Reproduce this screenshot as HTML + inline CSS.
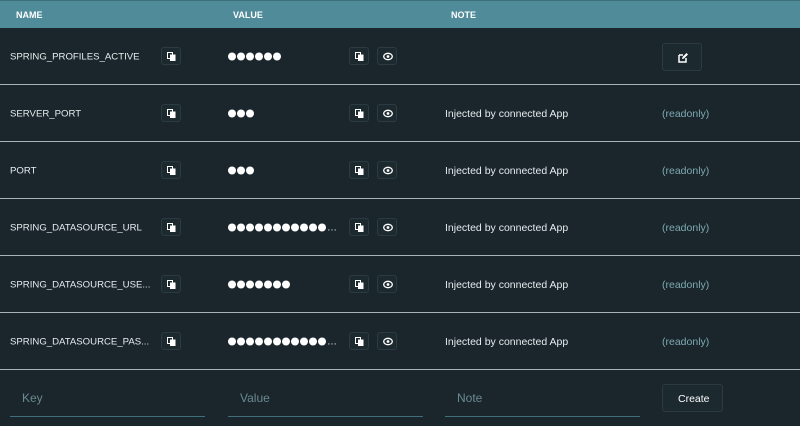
<!DOCTYPE html>
<html><head><style>
body{margin:0;width:800px;height:426px;background:#1a262c;font-family:"Liberation Sans",sans-serif;color:#e6ecee;overflow:hidden;position:relative}
.hd{position:absolute;left:0;top:0;width:800px;height:28px;background:#4f8b99;border-top:1px solid #3d6f7a;box-sizing:border-box}
.hd span{position:absolute;top:9px;font-size:9px;font-weight:bold;color:#fff}
.row{position:absolute;left:0;width:800px;height:57px;border-bottom:1px solid #a9b3b6;box-sizing:border-box}
.t{position:absolute;top:50%;transform:translateY(-50%);font-size:10.5px;white-space:nowrap;margin-top:1px}
.n{font-size:9.6px}
.b{position:absolute;width:20px;height:18px;border:1px solid #2c3b42;border-radius:3px;box-sizing:border-box;background:#1c292f;top:19px}
.b svg{position:absolute;left:5px;top:4px}
.dots{font-size:10px;line-height:9px}
.dots i{display:inline-block;width:8px;height:8px;border-radius:50%;background:#fff;margin-right:1px;vertical-align:middle}
.ro{color:#7fa9b3}
.in{position:absolute;top:386px;width:195px;height:30px;border-bottom:1px solid #3e6f7a}
.in span{position:absolute;left:12px;top:5px;font-size:12px;color:#6a8990}
</style></head><body>
<div class="hd"><span style="left:16px">NAME</span><span style="left:233px">VALUE</span><span style="left:451px">NOTE</span></div>
<div id="rest"></div>
<script>
var rows=[["SPRING_PROFILES_ACTIVE",6,0,0],["SERVER_PORT",3,0,1],["PORT",3,0,1],["SPRING_DATASOURCE_URL",11,1,1],["SPRING_DATASOURCE_USE...",7,0,1],["SPRING_DATASOURCE_PAS...",11,1,1]];
var cp='<svg width="9" height="9" viewBox="0 0 9 9"><rect x="0.5" y="0.5" width="5" height="6" fill="none" stroke="#fff"/><rect x="3" y="2.5" width="5.5" height="6.5" fill="#fff"/></svg>';
var ey='<svg width="10" height="9" viewBox="0 0 10 9"><ellipse cx="5" cy="4.5" rx="4.3" ry="3.2" fill="none" stroke="#fff" stroke-width="1.3"/><circle cx="5" cy="4.5" r="1.4" fill="#fff"/></svg>';
var ed='<div class="b" style="left:662px;top:15px;width:40px;height:28px"><svg style="left:15px;top:9px" width="10" height="10" viewBox="0 0 10 10"><path d="M1 2h4M1 2v7h7V5" fill="none" stroke="#fff" stroke-width="1.5"/><path d="M4 6l0.5-2 4-4 1.5 1.5-4 4z" fill="#fff"/></svg></div>';
var h='';rows.forEach(function(r,i){var top=28+i*57;var d='';for(var k=0;k<r[1];k++)d+='<i></i>';if(r[2])d+='…';
h+='<div class="row" style="top:'+top+'px"><span class="t n" style="left:10px">'+r[0]+'</span><div class="b" style="left:161px">'+cp+'</div><span class="t dots" style="left:228px">'+d+'</span><div class="b" style="left:349px">'+cp+'</div><div class="b" style="left:377px">'+ey+'</div>'+(r[3]?'<span class="t" style="left:445px">Injected by connected App</span><span class="t ro" style="left:662px">(readonly)</span>':ed)+'</div>';});
document.getElementById('rest').innerHTML=h;
</script>
<div class="in" style="left:10px"><span>Key</span></div>
<div class="in" style="left:228px"><span>Value</span></div>
<div class="in" style="left:445px"><span>Note</span></div>
<div class="b" style="left:662px;top:384px;width:61px;height:28px"><span style="position:absolute;left:15px;top:8px;font-size:10.5px;color:#fff">Create</span></div>
</body></html>
